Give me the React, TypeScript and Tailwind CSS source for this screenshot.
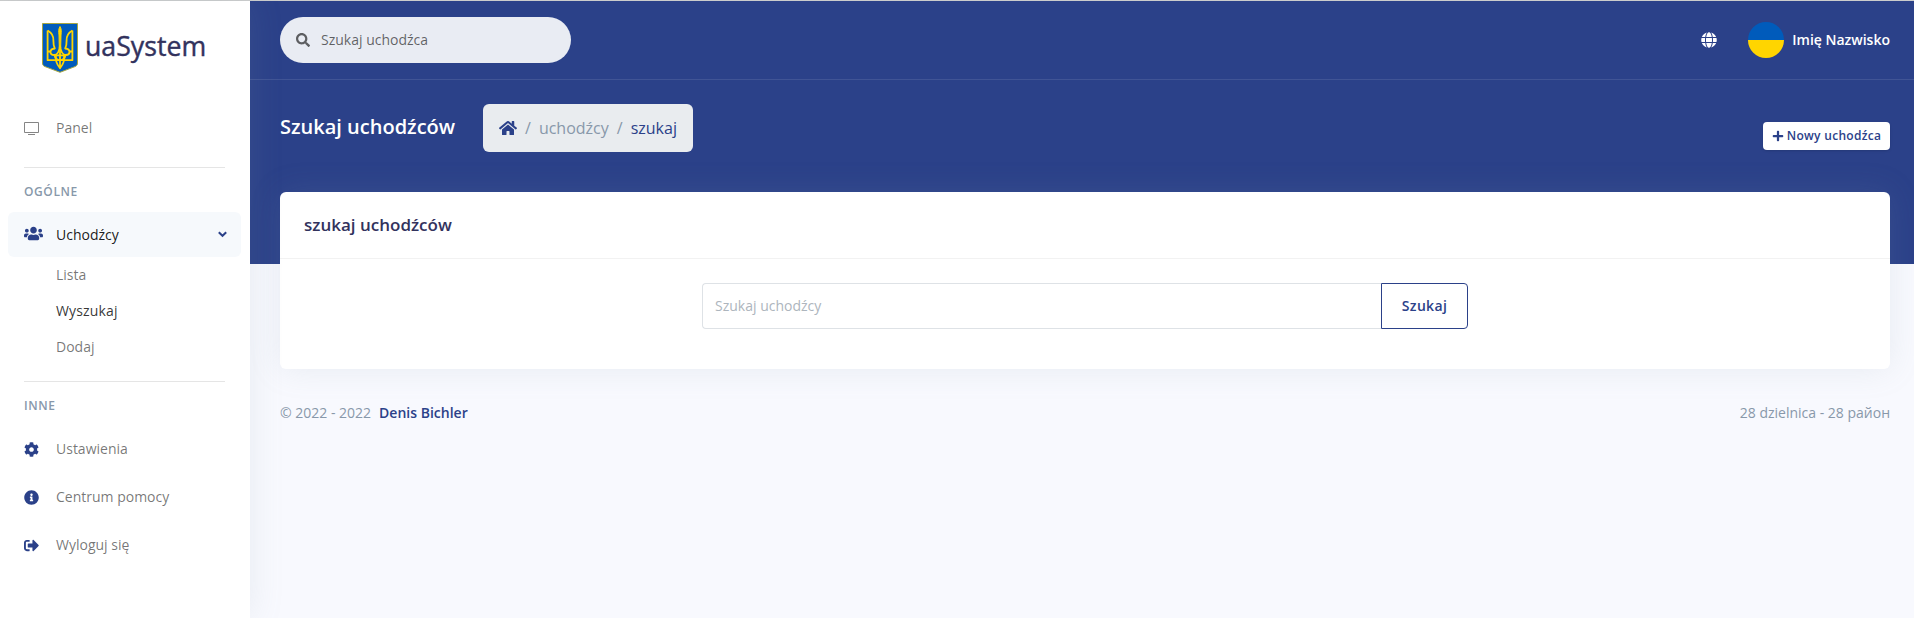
import type { ReactNode } from "react";
import { FaUsers, FaCog, FaInfoCircle, FaSearch, FaGlobe, FaHome, FaPlus, FaSignOutAlt } from "react-icons/fa";

function Emblem() {
  return (
    <svg width="36" height="50" viewBox="0 0 36 50" className="shrink-0">
      <path d="M.5 .5h35v39.5c0 2-.8 2.8-2.500 3.600L18 49.300 3 43.600C1.300 42.800.5 42 .5 40z" fill="#005bbb" stroke="#a5a540" strokeWidth="1" />
      <g fill="none" stroke="#ffd500" strokeWidth="1.800" strokeLinejoin="round">
        <path d="M5.600 7.500v29.700h24.800V7.500" />
        <path d="M5.600 7.500c4 2.200 6 5.500 5.800 10-.1 3.500.2 5.500 1.400 8-2.800.3-4.300 1.600-4.300 3.500 0 1.900 1.500 3 3.600 3 3 0 5.200-3.500 5.900-9.500" />
        <path d="M30.400 7.500c-4 2.200-6 5.500-5.800 10 .1 3.500-.2 5.500-1.400 8 2.800.3 4.300 1.600 4.300 3.500 0 1.900-1.500 3-3.600 3-3 0-5.200-3.500-5.900-9.500" />
        <path d="M5.600 28.500h3M30.400 28.500h-3M12.500 32c.5 3 2.500 5.200 5.500 5.200s5-2.200 5.500-5.200M12.500 32.300h11" />
        <path d="M14 32.500c-1 5.500.8 8.800 4 12.800 3.200-4 5-7.300 4-12.800M18 24v20" />
      </g>
      <path d="M18 3.500c1.600 2.500 1.400 5 1 8.500l-.3 13h-1.400l-.3-13c-.4-3.500-.6-6 1-8.500z" fill="#ffd500" stroke="#ffd500" />
    </svg>
  );
}

function MonitorIcon() {
  return (
    <svg width="16" height="15" viewBox="0 0 16 15" fill="none" stroke="#858585">
      <path d="M.5 1.500h14v10H.5zM4 13.500h7" />
    </svg>
  );
}

function Item({ icon, children }: { icon: ReactNode; children: ReactNode }) {
  return (
    <a className="flex h-12 items-center pl-6 text-sm text-black/55">
      <span className="w-8 text-[15px] text-[#2b4189]">{icon}</span>
      {children}
    </a>
  );
}

function Heading({ children }: { children: ReactNode }) {
  return <h6 className="h-[18px] pl-6 text-xs leading-[18px] font-semibold tracking-[0.6px] text-[#8898aa]">{children}</h6>;
}

function Sidebar() {
  return (
    <nav className="z-10 flex w-[250px] shrink-0 flex-col bg-white shadow-[0_0_32px_0_rgba(136,152,170,0.15)]">
      <div className="flex h-[103px] items-start pt-[22px] pl-[42px]">
        <Emblem />
        <span className="ml-[7px] text-[26.7px] leading-[45px] text-[#32325d] [-webkit-text-stroke:0.4px]">uaSystem</span>
      </div>
      <Item icon={<MonitorIcon />}>Panel</Item>
      <hr className="mx-6 mt-[15px] mr-[25px] border-black/10" />
      <div className="mt-[15px]"><Heading>OGÓLNE</Heading></div>
      <a className="mx-2 mt-[11px] mr-[9px] flex h-[45px] items-center rounded-md bg-[#f6f9fc] pl-4 text-sm text-black/90">
        <span className="w-8 pb-[3px] text-[19px] text-[#2b4189]"><FaUsers /></span>
        <span className="flex-1">Uchodźcy</span>
        <svg width="9" height="7" viewBox="0 0 9 7" className="mr-[14px]" fill="none" stroke="#2b4189" strokeWidth="2">
          <path d="M.8 1.200L4.500 4.800 8.200 1.200" />
        </svg>
      </a>
      <div className="flex flex-col pl-14 text-sm text-black/55">
        <a className="h-9 leading-9">Lista</a>
        <a className="h-9 leading-9 tracking-[0.15px] text-black/80">Wyszukaj</a>
        <a className="h-9 leading-9">Dodaj</a>
      </div>
      <hr className="mx-6 mt-4 mr-[25px] border-black/10" />
      <div className="mt-[15px] mb-[10px]"><Heading>INNE</Heading></div>
      <Item icon={<FaCog />}>Ustawienia</Item>
      <Item icon={<FaInfoCircle />}>Centrum pomocy</Item>
      <Item icon={<FaSignOutAlt />}>Wyloguj się</Item>
    </nav>
  );
}

export default function App() {
  return (
    <div className="flex h-[618px] w-[1914px] flex-col overflow-hidden bg-[#f8f9fe] font-['Open_Sans',sans-serif]">
      <div className="h-px shrink-0 bg-[#cbcccc]" />
      <div className="flex min-h-0 flex-1">
        <Sidebar />
        <main className="flex flex-1 flex-col">
          <div className="h-[263px] shrink-0 bg-[#2b4189]">
            <header className="flex h-[79px] items-center justify-between border-b border-white/10 pr-6 pl-[30px]">
              <div className="flex h-[46px] w-[291px] items-center rounded-full bg-[#e9ecf3] pl-4 text-sm text-black/60">
                <FaSearch className="mr-[11px] text-sm" />
                Szukaj uchodźca
              </div>
              <div className="flex items-center text-sm font-semibold text-white">
                <FaGlobe className="mr-[31px] text-base" />
                <svg width="36" height="36" viewBox="0 0 36 36" className="mr-2">
                  <path d="M0 18a18 18 0 0 1 36 0z" fill="#005bbb" />
                  <path d="M0 18a18 18 0 0 0 36 0z" fill="#ffd500" />
                </svg>
                Imię Nazwisko
              </div>
            </header>
            <div className="flex items-start pt-6 pr-6 pl-[30px]">
              <h2 className="w-[203px] pt-2 text-xl leading-[30px] font-semibold text-white">Szukaj uchodźców</h2>
              <nav className="flex h-12 w-[210px] items-center rounded-md bg-[#e9ecef] pl-4 text-base text-[#8898aa]">
                <FaHome className="mr-2 text-lg text-[#2b4189]" />
                <span className="mr-2">/</span>
                <span className="mr-2">uchodźcy</span>
                <span className="mr-2">/</span>
                <span className="text-[#2b4189]">szukaj</span>
              </nav>
              <button className="mt-[18px] ml-auto flex h-7 w-[127px] items-center justify-center rounded bg-white text-xs font-semibold tracking-[0.3px] text-[#2b4189] shadow-sm">
                <FaPlus className="mr-[3px]" />
                Nowy uchodźca
              </button>
            </div>
          </div>
          <section className="mt-[-72px] mr-6 ml-[30px] h-[177px] shrink-0 rounded-md bg-white shadow-[0_0_32px_0_rgba(136,152,170,0.15)]">
            <h3 className="h-[67px] border-b border-black/5 pl-6 text-[17px] leading-[66px] font-semibold text-[#32325d]">szukaj uchodźców</h3>
            <div className="flex justify-center pt-6">
              <div className="h-[46px] w-[679px] rounded-l border border-r-0 border-[#dee2e6] pl-3 text-sm leading-[44px] text-[#adb5bd]">Szukaj uchodźcy</div>
              <button className="h-[46px] w-[87px] rounded-r border border-[#2b4189] text-sm font-semibold tracking-[0.35px] text-[#2b4189]">Szukaj</button>
            </div>
          </section>
          <footer className="flex justify-between pt-[34px] pr-6 pl-[30px] text-sm text-[#8898aa]">
            <div>© 2022 - 2022<a className="ml-2 font-semibold text-[#2b4189]">Denis Bichler</a></div>
            <div>28 dzielnica - 28 район</div>
          </footer>
        </main>
      </div>
    </div>
  );
}
